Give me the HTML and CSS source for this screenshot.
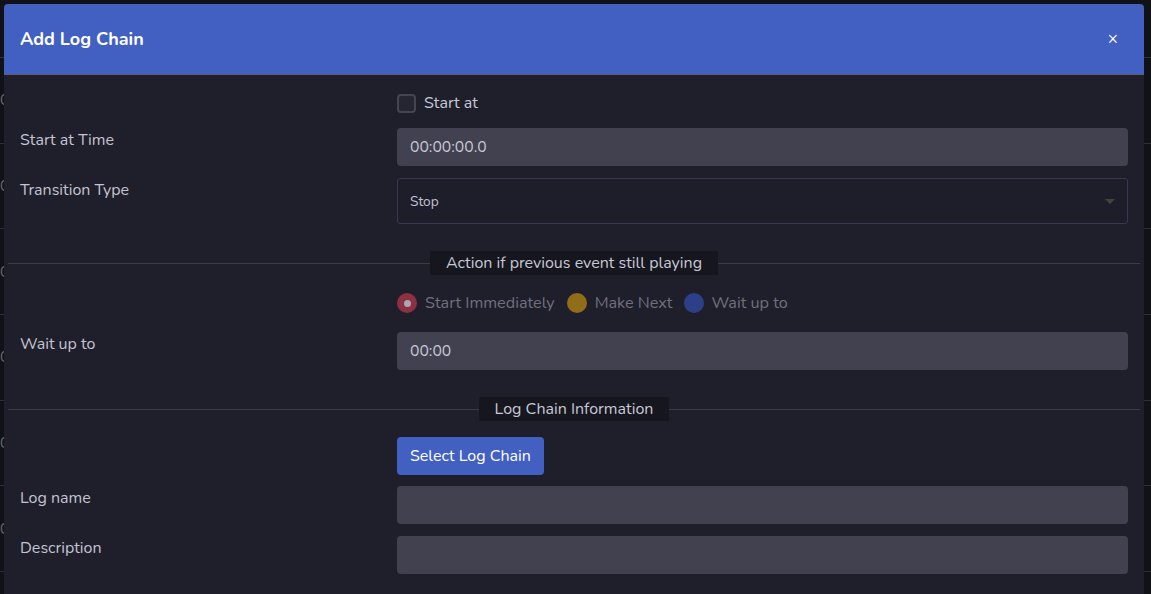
FILE: index.html
```html
<!DOCTYPE html>
<html lang="en">
<head>
<meta charset="utf-8">
<title>Add Log Chain</title>
<link rel="stylesheet" href="styles.css">
</head>
<body>
<div class="backdrop">
  <div class="bg-row first"></div>
  <div class="bg-row"><span class="bg-cell">00</span></div>
  <div class="bg-row"><span class="bg-cell">00</span></div>
  <div class="bg-row"><span class="bg-cell">00</span></div>
  <div class="bg-row"><span class="bg-cell">00</span></div>
  <div class="bg-row"><span class="bg-cell">00</span></div>
  <div class="bg-row"><span class="bg-cell">00</span></div>
  <div class="bg-row"><span class="bg-cell">00</span></div>
</div>

<div class="modal">
  <div class="modal-header">
    <h5 class="modal-title">Add Log Chain</h5>
    <span class="close">&times;</span>
  </div>
  <div class="modal-body">
    <div class="row row-check">
      <div class="label"></div>
      <div class="control check-line">
        <span class="checkbox"></span>
        <span class="check-text">Start at</span>
      </div>
    </div>
    <div class="row">
      <div class="label">Start at Time</div>
      <div class="control"><div class="input">00:00:00.0</div></div>
    </div>
    <div class="row">
      <div class="label">Transition Type</div>
      <div class="control">
        <div class="select"><span>Stop</span><span class="caret"></span></div>
      </div>
    </div>

    <div class="divider divider-1"><span class="legend">Action if previous event still playing</span></div>

    <div class="row row-radio">
      <div class="label"></div>
      <div class="control radios">
        <span class="radio red checked"></span><span class="radio-text">Start Immediately</span>
        <span class="radio yellow"></span><span class="radio-text">Make Next</span>
        <span class="radio blue"></span><span class="radio-text">Wait up to</span>
      </div>
    </div>
    <div class="row">
      <div class="label">Wait up to</div>
      <div class="control"><div class="input">00:00</div></div>
    </div>

    <div class="divider divider-2"><span class="legend">Log Chain Information</span></div>

    <div class="row row-btn">
      <div class="label"></div>
      <div class="control"><button class="btn">Select Log Chain</button></div>
    </div>
    <div class="row">
      <div class="label">Log name</div>
      <div class="control"><div class="input"></div></div>
    </div>
    <div class="row">
      <div class="label">Description</div>
      <div class="control"><div class="input"></div></div>
    </div>
  </div>
</div>
</body>
</html>
```

FILE: styles.css
```css
* { box-sizing: border-box; }
html, body {
  margin: 0;
  padding: 0;
  width: 1151px;
  height: 594px;
  overflow: hidden;
  background: #111118;
  font-family: "Nunito", "Lato", "Noto Sans", sans-serif;
}
.backdrop {
  position: relative;
}
.bg-row {
  height: 85.67px;
  border-top: 1px solid #2e2e38;
  color: #6a6a74;
  font-size: 15px;
  display: flex;
  align-items: center;
}
.bg-row.first {
  height: 57px;
  border-top: none;
}
.bg-cell {
  margin-left: -9px;
}
.modal {
  position: absolute;
  left: 4px;
  top: 4px;
  width: 1140px;
  height: 600px;
  background: #1f1f2b;
  border-radius: 4px 4px 0 0;
  overflow: hidden;
}
.modal-header {
  height: 71px;
  background: #425fc2;
  border-bottom: 1px solid #5d5f6e;
  display: flex;
  align-items: center;
  justify-content: space-between;
  padding: 0 26px 0 16px;
}
.modal-title {
  margin: 0;
  color: #ffffff;
  font-size: 18px;
  font-weight: 700;
  padding-bottom: 1px;
}
.close {
  color: #ffffff;
  font-size: 17px;
  line-height: 1;
  padding-bottom: 2px;
}
.modal-body {
  padding: 17px 16px 0 16px;
}
.row {
  display: grid;
  grid-template-columns: 377px 1fr;
  margin-bottom: 12px;
}
.label {
  color: #c3c3d1;
  font-size: 16px;
  line-height: 22px;
  padding-top: 1px;
}
.row-check { margin-bottom: 14px; }
.check-line {
  display: flex;
  align-items: center;
  height: 22px;
}
.checkbox {
  width: 19px;
  height: 19px;
  border: 2px solid #454552;
  border-radius: 4px;
  background: #262632;
  margin-right: 8px;
}
.check-text {
  color: #c8c8d6;
  font-size: 16px;
}
.input {
  height: 38px;
  background: #41414f;
  border-radius: 4px;
  color: #c8c8d6;
  font-size: 15.7px;
  line-height: 38px;
  padding: 0 13px;
}
.select {
  height: 46px;
  border: 1px solid #383853;
  border-radius: 3px;
  background: #1e1e2a;
  color: #c3c3d1;
  font-size: 13.7px;
  display: flex;
  align-items: center;
  justify-content: space-between;
  padding: 0 12px 0 12px;
}
.caret {
  width: 0;
  height: 0;
  border-left: 5px solid transparent;
  border-right: 5px solid transparent;
  border-top: 5px solid #454537;
  margin-top: 1px;
}
.divider {
  margin: 0 -12px;
  height: 24px;
  display: flex;
  align-items: center;
  justify-content: center;
  position: relative;
}
.divider::before {
  content: "";
  position: absolute;
  left: 0;
  right: 0;
  top: 12px;
  border-top: 1px solid #3b3b48;
}
.divider-1 { margin-top: 27px; margin-bottom: 17px; }
.divider-2 { margin-top: 27px; margin-bottom: 16px; }
.legend {
  position: relative;
  background: #16161f;
  color: #c8c8d6;
  font-size: 16px;
  line-height: 24px;
  padding: 0 16px;
}
.row-radio { margin-bottom: 18px; }
.radios {
  display: flex;
  align-items: center;
  height: 22px;
}
.radio {
  width: 20px;
  height: 20px;
  border-radius: 50%;
  margin-right: 8px;
  display: flex;
  align-items: center;
  justify-content: center;
}
.radio.red { background: #8c3141; }
.radio.yellow { background: #8f6d19; }
.radio.blue { background: #2e3f8a; margin-right: 7px; }
.radio.checked::after {
  content: "";
  width: 7px;
  height: 7px;
  border-radius: 50%;
  background: #a8a8b0;
}
.radio-text {
  color: #6f6f80;
  font-size: 16.2px;
  margin-right: 12px;
}
.row-btn { margin-bottom: 11px; }
.btn {
  height: 38px;
  padding: 0 13px;
  border: none;
  border-radius: 4px;
  background: #425fc2;
  color: #ffffff;
  font-family: inherit;
  font-size: 16px;
  cursor: pointer;
}
```
